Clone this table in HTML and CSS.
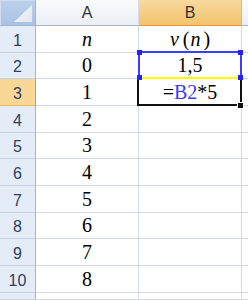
FILE: index.html
```html
<!DOCTYPE html>
<html>
<head>
<meta charset="utf-8">
<link rel="stylesheet" href="styles.css">
</head>
<body>
<div class="sheet">
  <div class="corner"><span class="tri"></span></div>
  <div class="colhead">A</div>
  <div class="colhead sel">B</div>
  <div class="colhead last"></div>

  <div class="rowhead">1</div>
  <div class="cell"><i>n</i></div>
  <div class="cell"><span class="fx"><i class="v">v</i>(<i class="n">n</i>)</span></div>
  <div class="cell last"></div>

  <div class="rowhead">2</div>
  <div class="cell">0</div>
  <div class="cell">1,5</div>
  <div class="cell last"></div>

  <div class="rowhead sel">3</div>
  <div class="cell">1</div>
  <div class="cell">=<span class="ref">B2</span>*5</div>
  <div class="cell last"></div>

  <div class="rowhead">4</div>
  <div class="cell">2</div>
  <div class="cell"></div>
  <div class="cell last"></div>

  <div class="rowhead">5</div>
  <div class="cell">3</div>
  <div class="cell"></div>
  <div class="cell last"></div>

  <div class="rowhead">6</div>
  <div class="cell">4</div>
  <div class="cell"></div>
  <div class="cell last"></div>

  <div class="rowhead">7</div>
  <div class="cell">5</div>
  <div class="cell"></div>
  <div class="cell last"></div>

  <div class="rowhead">8</div>
  <div class="cell">6</div>
  <div class="cell"></div>
  <div class="cell last"></div>

  <div class="rowhead">9</div>
  <div class="cell">7</div>
  <div class="cell"></div>
  <div class="cell last"></div>

  <div class="rowhead">10</div>
  <div class="cell">8</div>
  <div class="cell"></div>
  <div class="cell last"></div>

  <div class="rowhead"></div>
  <div class="cell"></div>
  <div class="cell"></div>
  <div class="cell last"></div>

  <div class="box-active"></div>
  <div class="box-ref"></div>
  <div class="yellow"></div>
  <div class="knob k1"></div>
  <div class="knob k2"></div>
  <div class="knob k3"></div>
  <div class="knob k4"></div>
  <div class="handle"></div>
</div>
</body>
</html>
```

FILE: styles.css
```css
html, body {
  margin: 0;
  padding: 0;
  background: #fff;
  overflow: hidden;
}
.sheet {
  position: relative;
  width: 248px;
  height: 300px;
  display: grid;
  grid-template-columns: 36px 103px 103px 1fr;
  grid-template-rows: 26px 27px 26px 27px 27px 26px 27px 27px 26px 27px 27px 1fr;
}
.sheet > div {
  box-sizing: border-box;
}
.corner {
  position: relative;
  background: linear-gradient(#bcd0ea, #a9c2e5);
  border-right: 1px solid #9eb6ce;
  border-bottom: 1px solid #9eb6ce;
  box-shadow: inset 1px 1px 0 #d0ddf0;
}
.tri {
  position: absolute;
  right: 3px;
  bottom: 3px;
  width: 18px;
  height: 17px;
  background: linear-gradient(135deg, #f8fafc, #dfe5ee);
  clip-path: polygon(100% 0, 100% 100%, 0 100%);
}
.colhead {
  display: flex;
  align-items: center;
  justify-content: center;
  padding-top: 1px;
  font-family: "Liberation Sans", Arial, sans-serif;
  font-size: 16px;
  color: #333;
  background: linear-gradient(#fafbfd, #ebeff5);
  border-right: 1px solid #d5dde8;
  border-bottom: 1px solid #9eb6ce;
}
.colhead.sel {
  background: linear-gradient(#f9d99e, #f2c46c);
  border-right: 1px solid #f2b35a;
  border-bottom: 1px solid #f29436;
}
.colhead.last {
  border-right: none;
}
.rowhead {
  display: flex;
  align-items: center;
  justify-content: center;
  padding-top: 3px;
  font-family: "Liberation Sans", Arial, sans-serif;
  font-size: 16px;
  color: #2e4160;
  background: #e4ecf7;
  border-right: 1px solid #9eb6ce;
  border-bottom: 1px solid #c5d2e3;
}
.rowhead.sel {
  background: #f8d797;
  border-right: 1px solid #f29436;
  border-bottom: 1px solid #f2b35a;
}
.cell {
  display: flex;
  align-items: flex-end;
  justify-content: center;
  padding-bottom: 2px;
  font-family: "Liberation Serif", "Times New Roman", serif;
  font-size: 20px;
  line-height: 22px;
  color: #000;
  border-right: 1px solid #d0d7e5;
  border-bottom: 1px solid #d0d7e5;
}
.cell.last {
  border-right: none;
}
.cell i {
  font-style: italic;
}
.fx .v {
  margin-right: 4px;
}
.fx .n {
  margin-left: 1px;
  margin-right: 3px;
}
.ref {
  color: #3a3aff;
}
.box-active {
  position: absolute;
  left: 137px;
  top: 77px;
  width: 105px;
  height: 29px;
  box-sizing: border-box;
  border: 2px solid #111;
}
.box-ref {
  position: absolute;
  left: 138px;
  top: 51px;
  width: 104px;
  height: 28px;
  box-sizing: border-box;
  border: 2px solid #3c3cff;
}
.yellow {
  position: absolute;
  left: 140px;
  top: 77px;
  width: 100px;
  height: 2px;
  background: #ffff00;
}
.knob {
  position: absolute;
  width: 5px;
  height: 5px;
  background: #2323ff;
}
.k1 { left: 137px; top: 50px; }
.k2 { left: 238px; top: 50px; }
.k3 { left: 137px; top: 75px; }
.k4 { left: 238px; top: 75px; }
.handle {
  position: absolute;
  left: 238px;
  top: 103px;
  width: 5px;
  height: 5px;
  background: #111;
  box-shadow: 0 0 0 1px #fff;
}
```
